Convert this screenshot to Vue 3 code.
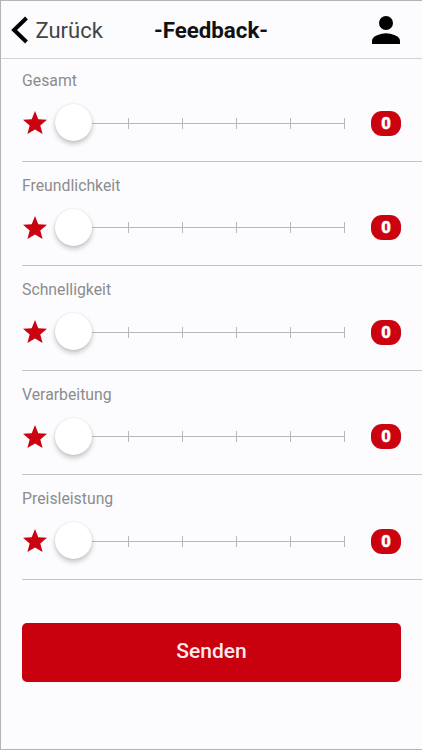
<script setup>
import { reactive } from 'vue'

const ratings = reactive([
  { name: 'Gesamt', value: 0 },
  { name: 'Freundlichkeit', value: 0 },
  { name: 'Schnelligkeit', value: 0 },
  { name: 'Verarbeitung', value: 0 },
  { name: 'Preisleistung', value: 0 },
])

function step(item) {
  item.value = (item.value + 1) % 6
}
</script>

<template>
  <div class="screen">
    <header class="toolbar">
      <button class="back" type="button">
        <svg class="chevron" viewBox="0 0 18 28"><path d="M15.5 2 L3.1 14 L15.5 26" /></svg>
        <span>Zurück</span>
      </button>
      <h1 class="title">-Feedback-</h1>
      <svg class="person" viewBox="0 0 28 28">
        <circle cx="14" cy="7" r="7" />
        <path d="M0 28v-3.3C0 20 9 17.2 14 17.2S28 20 28 24.7V28z" />
      </svg>
    </header>

    <main>
      <section v-for="item in ratings" :key="item.name" class="rating">
        <div class="label">{{ item.name }}</div>
        <div class="controls">
          <svg class="star" viewBox="0 0 24 23">
            <path d="M12 0l3.3 8.2 8.7.6-6.7 5.6 2.3 8.6L12 18.4 4.4 23l2.3-8.6L0 8.8l8.7-.6z" />
          </svg>
          <div class="range" @click="step(item)">
            <div class="track">
              <i v-for="n in 6" :key="n" class="tick"></i>
            </div>
            <div class="knob" :style="{ left: item.value * 20 + '%' }"></div>
          </div>
          <span class="badge">{{ item.value }}</span>
        </div>
      </section>
    </main>

    <button class="send" type="button">Senden</button>
  </div>
</template>

<style>
body {
  margin: 0;
  background: #fcfcfe;
}
</style>

<style scoped>
.screen {
  box-sizing: border-box;
  width: 422px;
  height: 750px;
  border: solid #b4b4b6;
  border-width: 1px 0 1px 1px;
  background: #fcfcfe;
  font-family: Roboto, sans-serif;
  overflow: hidden;
}
.toolbar {
  box-sizing: border-box;
  height: 58px;
  display: grid;
  grid-template-columns: 1fr auto 1fr;
  align-items: center;
  padding: 1px 22px 0 10px;
  border-bottom: 1px solid #d2d2d4;
}
.back {
  display: flex;
  align-items: center;
  gap: 6.5px;
  padding: 0;
  border: 0;
  background: none;
  color: #444446;
  font: 400 22px/26px Roboto, sans-serif;
}
.back span {
  padding-top: 1px;
}
.chevron {
  width: 18px;
  height: 28px;
  fill: none;
  stroke: #000;
  stroke-width: 4;
}
.title {
  margin: 0;
  padding: 0 0 1px 11px;
  color: #111;
  font-size: 22.3px;
  line-height: 26px;
  font-weight: 700;
}
.person {
  justify-self: end;
  width: 28px;
  height: 28px;
  margin-right: .5px;
}
main {
  margin: -2px 0 0 21px;
}
.rating {
  box-sizing: border-box;
  height: 104.6px;
  padding-top: 13.95px;
  border-bottom: 1px solid #c3c3c6;
}
.label {
  height: 20px;
  line-height: 20px;
  font-size: 15.8px;
  color: #8c8c8e;
}
.controls {
  height: 38px;
  margin-top: 13.15px;
  padding-right: 21px;
  display: flex;
  align-items: center;
}
.star {
  width: 24px;
  height: 23px;
  margin: 0 27.5px 1px .5px;
  fill: #cb0310;
}
.range {
  position: relative;
  width: 271px;
}
.track {
  height: 11px;
  display: flex;
  justify-content: space-between;
  background: linear-gradient(#b8b8ba, #b8b8ba) 0 5px / 100% 1px no-repeat;
}
.tick {
  width: 1px;
  background: #b8b8ba;
}
.knob {
  position: absolute;
  top: 50%;
  width: 37px;
  height: 37px;
  margin: -19px 0 0 -19px;
  border-radius: 50%;
  background: #fff;
  box-shadow: 0 3px 5px rgba(0, 0, 0, 0.22), 0 0 2px rgba(0, 0, 0, 0.1);
}
.badge {
  width: 30px;
  height: 25px;
  margin-left: auto;
  border-radius: 11px;
  background: #cb0310;
  color: #fff;
  text-align: center;
  font-size: 16.5px;
  line-height: 25px;
  font-weight: 900;
  -webkit-text-stroke: 0.4px #fff;
}
.send {
  display: block;
  width: 379px;
  height: 59px;
  margin: 43px 0 0 21px;
  padding: 0 0 2px;
  border: 0;
  border-radius: 5px;
  background: #c9000d;
  color: #ffe9ec;
  font: 500 21px/26px Roboto, sans-serif;
}
</style>
